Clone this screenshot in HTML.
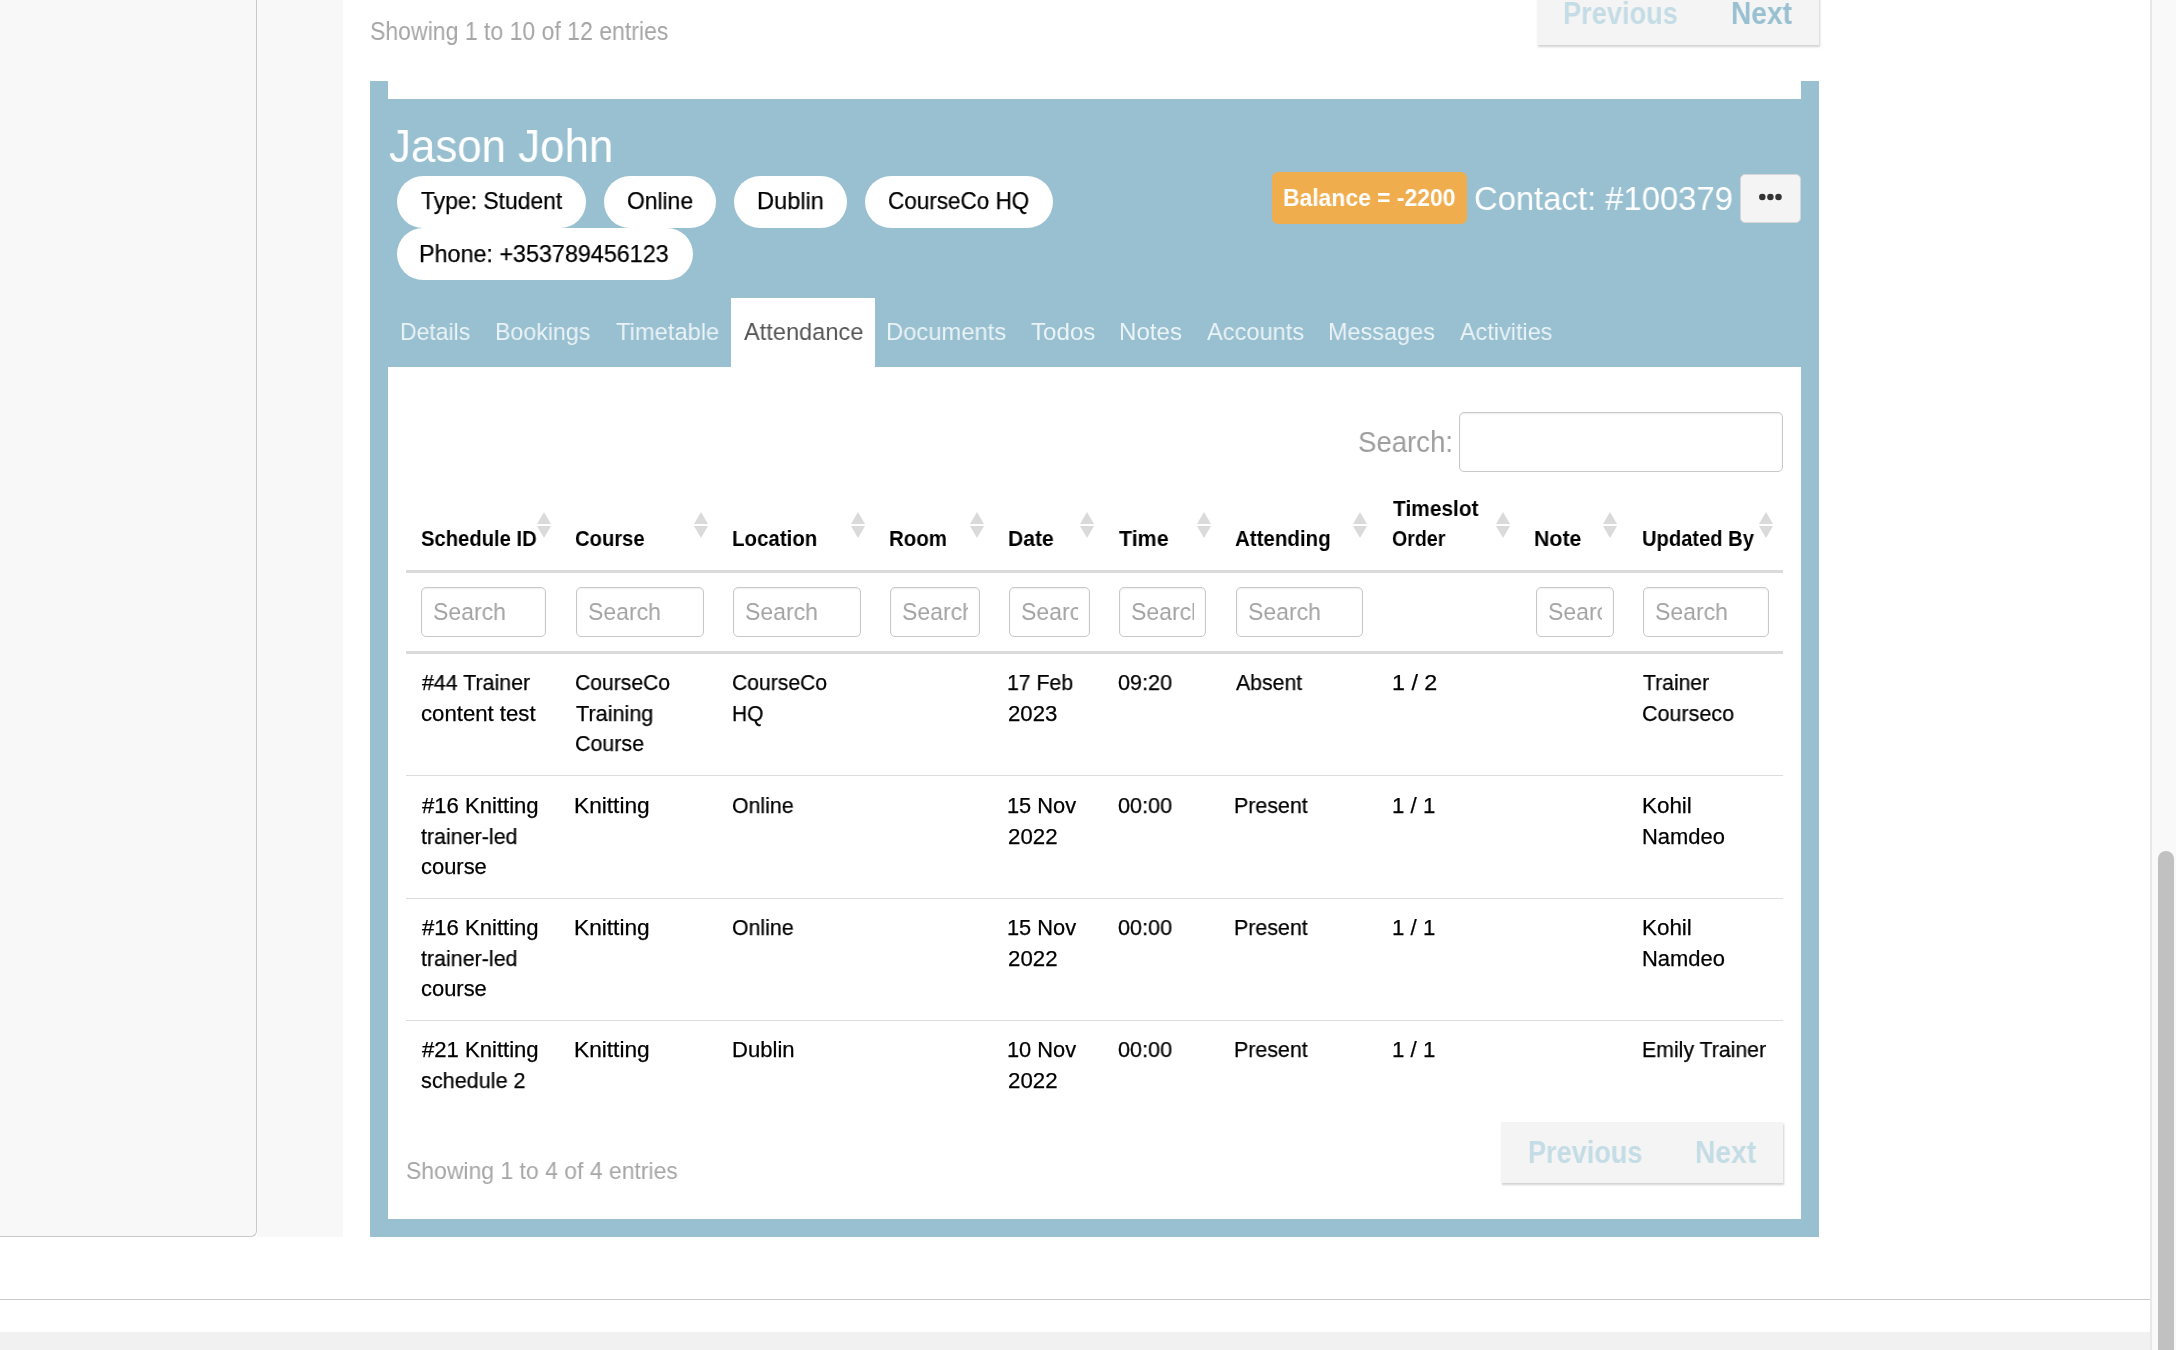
<!DOCTYPE html>
<html><head><meta charset="utf-8"><title>Attendance</title>
<style>
html,body{margin:0;padding:0;}
body{width:2176px;height:1350px;overflow:hidden;position:relative;background:#fff;font-family:"Liberation Sans",sans-serif;}
body div{position:absolute;}
.t{position:absolute;white-space:pre;transform-origin:0 0;will-change:transform;}
</style></head><body>
<div style="left:0px;top:-10px;width:256px;height:1246px;background:#f8f8f8;border-right:1px solid #c9c9c9;border-bottom:1px solid #c9c9c9;border-bottom-right-radius:6px;"></div>
<div style="left:257px;top:0px;width:86px;height:1237px;background:#f8f8f8;"></div>
<div style="left:0px;top:1299px;width:2150px;height:1px;background:#cacaca;"></div>
<div style="left:0px;top:1332px;width:2150px;height:18px;background:#f1f1f1;"></div>
<div style="left:2150px;top:0px;width:2px;height:1350px;background:#e7e7e7;"></div>
<div style="left:2152px;top:0px;width:24px;height:1350px;background:#f9f9f9;"></div>
<div style="left:2158px;top:851px;width:16px;height:520px;background:#c1c1c1;border-radius:8px;"></div>
<div style="left:1537px;top:-16px;width:282px;height:61px;background:#f4f4f4;box-shadow:1px 2px 2px rgba(0,0,0,0.18);"></div>
<span class="t" style="left:1563.23px;top:-2.34px;font-size:30.52px;line-height:30.52px;font-weight:bold;color:#c4dce5;transform:scaleX(0.8906);">Previous</span>
<span class="t" style="left:1731.17px;top:-2.34px;font-size:30.52px;line-height:30.52px;font-weight:bold;color:#98c0d1;transform:scaleX(0.9217);">Next</span>
<span class="t" style="left:369.96px;top:19.17px;font-size:25.44px;line-height:25.44px;color:#a6a6a6;transform:scaleX(0.9054);">Showing 1 to 10 of 12 entries</span>
<div style="left:370px;top:81px;width:1449px;height:1156px;background:#98c0d1;"></div>
<div style="left:388px;top:81px;width:1413px;height:18px;background:#fff;"></div>
<div style="left:388px;top:367px;width:1413px;height:852px;background:#fff;"></div>
<div style="left:731px;top:298px;width:144px;height:69px;background:#fff;"></div>
<span class="t" style="left:389.04px;top:122.75px;font-size:46.08px;line-height:46.08px;color:#ffffff;transform:scaleX(0.9518);">Jason John</span>
<div style="left:397px;top:176px;width:189px;height:52px;background:#fff;border-radius:26px;"></div>
<span class="t" style="left:420.94px;top:189.22px;font-size:23.84px;line-height:23.84px;color:#000;transform:scaleX(0.9599);-webkit-text-stroke:0.25px #000;">Type: Student</span>
<div style="left:604px;top:176px;width:112px;height:52px;background:#fff;border-radius:26px;"></div>
<span class="t" style="left:626.97px;top:189.22px;font-size:23.84px;line-height:23.84px;color:#000;transform:scaleX(0.9589);-webkit-text-stroke:0.25px #000;">Online</span>
<div style="left:734px;top:176px;width:113px;height:52px;background:#fff;border-radius:26px;"></div>
<span class="t" style="left:757.11px;top:189.22px;font-size:23.84px;line-height:23.84px;color:#000;transform:scaleX(0.9903);-webkit-text-stroke:0.25px #000;">Dublin</span>
<div style="left:865px;top:176px;width:188px;height:52px;background:#fff;border-radius:26px;"></div>
<span class="t" style="left:887.88px;top:189.22px;font-size:23.84px;line-height:23.84px;color:#000;transform:scaleX(0.9436);-webkit-text-stroke:0.25px #000;">CourseCo HQ</span>
<div style="left:397px;top:228px;width:296px;height:52px;background:#fff;border-radius:26px;"></div>
<span class="t" style="left:419.13px;top:241.8px;font-size:23.98px;line-height:23.98px;color:#000;transform:scaleX(0.9730);-webkit-text-stroke:0.25px #000;">Phone: +353789456123</span>
<div style="left:1272px;top:172px;width:195px;height:52px;background:#f0ad4e;border-radius:6px;"></div>
<span class="t" style="left:1283.01px;top:186.32px;font-size:23.84px;line-height:23.84px;font-weight:bold;color:#fff;transform:scaleX(0.9605);">Balance = -2200</span>
<span class="t" style="left:1473.96px;top:182.13px;font-size:33.87px;line-height:33.87px;color:#fff;transform:scaleX(0.9684);">Contact: #100379</span>
<div style="left:1740px;top:174px;width:61px;height:49px;background:#f4f4f4;border:1px solid #d6d6d6;border-radius:5px;box-sizing:border-box;"></div>
<svg style="position:absolute;left:1750px;top:187px;" width="40" height="20" viewBox="0 0 40 20"><circle cx="12.3" cy="10.1" r="3.25" fill="#333"/><circle cx="20.4" cy="10.1" r="3.25" fill="#333"/><circle cx="28.5" cy="10.1" r="3.25" fill="#333"/></svg>
<span class="t" style="left:400.16px;top:319.98px;font-size:24.13px;line-height:24.13px;color:rgba(255,255,255,0.8);transform:scaleX(0.9516);">Details</span>
<span class="t" style="left:495.15px;top:319.98px;font-size:24.13px;line-height:24.13px;color:rgba(255,255,255,0.8);transform:scaleX(0.9605);">Bookings</span>
<span class="t" style="left:616.03px;top:319.98px;font-size:24.13px;line-height:24.13px;color:rgba(255,255,255,0.8);transform:scaleX(0.9835);">Timetable</span>
<span class="t" style="left:744.30px;top:319.98px;font-size:24.13px;line-height:24.13px;color:#555555;transform:scaleX(0.9777);">Attendance</span>
<span class="t" style="left:886.40px;top:319.98px;font-size:24.13px;line-height:24.13px;color:rgba(255,255,255,0.8);transform:scaleX(0.9848);">Documents</span>
<span class="t" style="left:1031.32px;top:319.98px;font-size:24.13px;line-height:24.13px;color:rgba(255,255,255,0.8);transform:scaleX(0.9937);">Todos</span>
<span class="t" style="left:1119.08px;top:319.98px;font-size:24.13px;line-height:24.13px;color:rgba(255,255,255,0.8);transform:scaleX(0.9967);">Notes</span>
<span class="t" style="left:1207.00px;top:319.98px;font-size:24.13px;line-height:24.13px;color:rgba(255,255,255,0.8);transform:scaleX(0.9782);">Accounts</span>
<span class="t" style="left:1327.52px;top:319.98px;font-size:24.13px;line-height:24.13px;color:rgba(255,255,255,0.8);transform:scaleX(0.9716);">Messages</span>
<span class="t" style="left:1459.70px;top:319.98px;font-size:24.13px;line-height:24.13px;color:rgba(255,255,255,0.8);transform:scaleX(0.9710);">Activities</span>
<span class="t" style="left:1358.46px;top:426.71px;font-size:30.23px;line-height:30.23px;color:#9e9e9e;transform:scaleX(0.9124);">Search:</span>
<div style="left:1459px;top:412px;width:324px;height:60px;background:#fff;border:1px solid #c8c8c8;border-radius:5px;box-sizing:border-box;box-shadow:inset 0 1px 2px rgba(0,0,0,0.08);"></div>
<span class="t" style="left:420.79px;top:528.48px;font-size:22.24px;line-height:22.24px;font-weight:bold;color:#000;transform:scaleX(0.9089);">Schedule ID</span>
<div style="left:536.7px;top:511.5px;width:0;height:0;border-left:7.3px solid transparent;border-right:7.3px solid transparent;border-bottom:12.2px solid #dadada;"></div>
<div style="left:536.7px;top:526px;width:0;height:0;border-left:7.3px solid transparent;border-right:7.3px solid transparent;border-top:12.2px solid #dadada;"></div>
<span class="t" style="left:575.19px;top:528.48px;font-size:22.24px;line-height:22.24px;font-weight:bold;color:#000;transform:scaleX(0.9087);">Course</span>
<div style="left:693.5px;top:511.5px;width:0;height:0;border-left:7.3px solid transparent;border-right:7.3px solid transparent;border-bottom:12.2px solid #dadada;"></div>
<div style="left:693.5px;top:526px;width:0;height:0;border-left:7.3px solid transparent;border-right:7.3px solid transparent;border-top:12.2px solid #dadada;"></div>
<span class="t" style="left:731.97px;top:528.48px;font-size:22.24px;line-height:22.24px;font-weight:bold;color:#000;transform:scaleX(0.9205);">Location</span>
<div style="left:850.6px;top:511.5px;width:0;height:0;border-left:7.3px solid transparent;border-right:7.3px solid transparent;border-bottom:12.2px solid #dadada;"></div>
<div style="left:850.6px;top:526px;width:0;height:0;border-left:7.3px solid transparent;border-right:7.3px solid transparent;border-top:12.2px solid #dadada;"></div>
<span class="t" style="left:889.17px;top:528.48px;font-size:22.24px;line-height:22.24px;font-weight:bold;color:#000;transform:scaleX(0.9193);">Room</span>
<div style="left:969.6px;top:511.5px;width:0;height:0;border-left:7.3px solid transparent;border-right:7.3px solid transparent;border-bottom:12.2px solid #dadada;"></div>
<div style="left:969.6px;top:526px;width:0;height:0;border-left:7.3px solid transparent;border-right:7.3px solid transparent;border-top:12.2px solid #dadada;"></div>
<span class="t" style="left:1007.63px;top:528.48px;font-size:22.24px;line-height:22.24px;font-weight:bold;color:#000;transform:scaleX(0.9493);">Date</span>
<div style="left:1079.7px;top:511.5px;width:0;height:0;border-left:7.3px solid transparent;border-right:7.3px solid transparent;border-bottom:12.2px solid #dadada;"></div>
<div style="left:1079.7px;top:526px;width:0;height:0;border-left:7.3px solid transparent;border-right:7.3px solid transparent;border-top:12.2px solid #dadada;"></div>
<span class="t" style="left:1118.69px;top:528.48px;font-size:22.24px;line-height:22.24px;font-weight:bold;color:#000;transform:scaleX(0.9626);">Time</span>
<div style="left:1196.8px;top:511.5px;width:0;height:0;border-left:7.3px solid transparent;border-right:7.3px solid transparent;border-bottom:12.2px solid #dadada;"></div>
<div style="left:1196.8px;top:526px;width:0;height:0;border-left:7.3px solid transparent;border-right:7.3px solid transparent;border-top:12.2px solid #dadada;"></div>
<span class="t" style="left:1235.19px;top:528.48px;font-size:22.24px;line-height:22.24px;font-weight:bold;color:#000;transform:scaleX(0.9220);">Attending</span>
<div style="left:1353.4px;top:511.5px;width:0;height:0;border-left:7.3px solid transparent;border-right:7.3px solid transparent;border-bottom:12.2px solid #dadada;"></div>
<div style="left:1353.4px;top:526px;width:0;height:0;border-left:7.3px solid transparent;border-right:7.3px solid transparent;border-top:12.2px solid #dadada;"></div>
<span class="t" style="left:1392.69px;top:497.88px;font-size:22.24px;line-height:22.24px;font-weight:bold;color:#000;transform:scaleX(0.9402);">Timeslot</span>
<span class="t" style="left:1392.12px;top:528.48px;font-size:22.24px;line-height:22.24px;font-weight:bold;color:#000;transform:scaleX(0.8800);">Order</span>
<div style="left:1496.4px;top:511.5px;width:0;height:0;border-left:7.3px solid transparent;border-right:7.3px solid transparent;border-bottom:12.2px solid #dadada;"></div>
<div style="left:1496.4px;top:526px;width:0;height:0;border-left:7.3px solid transparent;border-right:7.3px solid transparent;border-top:12.2px solid #dadada;"></div>
<span class="t" style="left:1534.31px;top:528.48px;font-size:22.24px;line-height:22.24px;font-weight:bold;color:#000;transform:scaleX(0.9586);">Note</span>
<div style="left:1602.5px;top:511.5px;width:0;height:0;border-left:7.3px solid transparent;border-right:7.3px solid transparent;border-bottom:12.2px solid #dadada;"></div>
<div style="left:1602.5px;top:526px;width:0;height:0;border-left:7.3px solid transparent;border-right:7.3px solid transparent;border-top:12.2px solid #dadada;"></div>
<span class="t" style="left:1641.79px;top:528.48px;font-size:22.24px;line-height:22.24px;font-weight:bold;color:#000;transform:scaleX(0.9059);">Updated By</span>
<div style="left:1758.7px;top:511.5px;width:0;height:0;border-left:7.3px solid transparent;border-right:7.3px solid transparent;border-bottom:12.2px solid #dadada;"></div>
<div style="left:1758.7px;top:526px;width:0;height:0;border-left:7.3px solid transparent;border-right:7.3px solid transparent;border-top:12.2px solid #dadada;"></div>
<div style="left:406px;top:570px;width:1377px;height:3px;background:#dadada;"></div>
<div style="left:421px;top:587px;width:125px;height:50px;background:#fff;border:1px solid #c8c8c8;border-radius:5px;box-sizing:border-box;box-shadow:inset 0 1px 2px rgba(0,0,0,0.07);"></div>
<div style="left:433px;top:587px;width:101px;height:50px;overflow:hidden;">
<span class="t" style="left:0.06px;top:12.58px;font-size:24.71px;line-height:24.71px;color:#a3a3a3;transform:scaleX(0.9313);">Search</span>
</div>
<div style="left:576px;top:587px;width:128px;height:50px;background:#fff;border:1px solid #c8c8c8;border-radius:5px;box-sizing:border-box;box-shadow:inset 0 1px 2px rgba(0,0,0,0.07);"></div>
<div style="left:588px;top:587px;width:104px;height:50px;overflow:hidden;">
<span class="t" style="left:0.06px;top:12.58px;font-size:24.71px;line-height:24.71px;color:#a3a3a3;transform:scaleX(0.9313);">Search</span>
</div>
<div style="left:733px;top:587px;width:128px;height:50px;background:#fff;border:1px solid #c8c8c8;border-radius:5px;box-sizing:border-box;box-shadow:inset 0 1px 2px rgba(0,0,0,0.07);"></div>
<div style="left:745px;top:587px;width:104px;height:50px;overflow:hidden;">
<span class="t" style="left:0.06px;top:12.58px;font-size:24.71px;line-height:24.71px;color:#a3a3a3;transform:scaleX(0.9313);">Search</span>
</div>
<div style="left:890px;top:587px;width:90px;height:50px;background:#fff;border:1px solid #c8c8c8;border-radius:5px;box-sizing:border-box;box-shadow:inset 0 1px 2px rgba(0,0,0,0.07);"></div>
<div style="left:902px;top:587px;width:66px;height:50px;overflow:hidden;">
<span class="t" style="left:0.06px;top:12.58px;font-size:24.71px;line-height:24.71px;color:#a3a3a3;transform:scaleX(0.9313);">Search</span>
</div>
<div style="left:1009px;top:587px;width:81px;height:50px;background:#fff;border:1px solid #c8c8c8;border-radius:5px;box-sizing:border-box;box-shadow:inset 0 1px 2px rgba(0,0,0,0.07);"></div>
<div style="left:1021px;top:587px;width:57px;height:50px;overflow:hidden;">
<span class="t" style="left:0.06px;top:12.58px;font-size:24.71px;line-height:24.71px;color:#a3a3a3;transform:scaleX(0.9313);">Search</span>
</div>
<div style="left:1119px;top:587px;width:87px;height:50px;background:#fff;border:1px solid #c8c8c8;border-radius:5px;box-sizing:border-box;box-shadow:inset 0 1px 2px rgba(0,0,0,0.07);"></div>
<div style="left:1131px;top:587px;width:63px;height:50px;overflow:hidden;">
<span class="t" style="left:0.06px;top:12.58px;font-size:24.71px;line-height:24.71px;color:#a3a3a3;transform:scaleX(0.9313);">Search</span>
</div>
<div style="left:1236px;top:587px;width:127px;height:50px;background:#fff;border:1px solid #c8c8c8;border-radius:5px;box-sizing:border-box;box-shadow:inset 0 1px 2px rgba(0,0,0,0.07);"></div>
<div style="left:1248px;top:587px;width:103px;height:50px;overflow:hidden;">
<span class="t" style="left:0.06px;top:12.58px;font-size:24.71px;line-height:24.71px;color:#a3a3a3;transform:scaleX(0.9313);">Search</span>
</div>
<div style="left:1536px;top:587px;width:78px;height:50px;background:#fff;border:1px solid #c8c8c8;border-radius:5px;box-sizing:border-box;box-shadow:inset 0 1px 2px rgba(0,0,0,0.07);"></div>
<div style="left:1548px;top:587px;width:54px;height:50px;overflow:hidden;">
<span class="t" style="left:0.06px;top:12.58px;font-size:24.71px;line-height:24.71px;color:#a3a3a3;transform:scaleX(0.9313);">Search</span>
</div>
<div style="left:1643px;top:587px;width:126px;height:50px;background:#fff;border:1px solid #c8c8c8;border-radius:5px;box-sizing:border-box;box-shadow:inset 0 1px 2px rgba(0,0,0,0.07);"></div>
<div style="left:1655px;top:587px;width:102px;height:50px;overflow:hidden;">
<span class="t" style="left:0.06px;top:12.58px;font-size:24.71px;line-height:24.71px;color:#a3a3a3;transform:scaleX(0.9313);">Search</span>
</div>
<div style="left:406px;top:651px;width:1377px;height:3px;background:#dadada;"></div>
<div style="left:406px;top:775px;width:1377px;height:1px;background:#dddddd;"></div>
<div style="left:406px;top:898px;width:1377px;height:1px;background:#dddddd;"></div>
<div style="left:406px;top:1020px;width:1377px;height:1px;background:#dddddd;"></div>
<span class="t" style="left:421.59px;top:672.04px;font-size:21.80px;line-height:21.80px;color:#000;transform:scaleX(0.9802);-webkit-text-stroke:0.25px #000;">#44 Trainer</span>
<span class="t" style="left:420.81px;top:702.64px;font-size:21.80px;line-height:21.80px;color:#000;transform:scaleX(1.0168);-webkit-text-stroke:0.25px #000;">content test</span>
<span class="t" style="left:575.24px;top:672.04px;font-size:21.80px;line-height:21.80px;color:#000;transform:scaleX(0.9683);-webkit-text-stroke:0.25px #000;">CourseCo</span>
<span class="t" style="left:575.87px;top:702.64px;font-size:21.80px;line-height:21.80px;color:#000;transform:scaleX(0.9922);-webkit-text-stroke:0.25px #000;">Training</span>
<span class="t" style="left:575.23px;top:733.24px;font-size:21.80px;line-height:21.80px;color:#000;transform:scaleX(0.9818);-webkit-text-stroke:0.25px #000;">Course</span>
<span class="t" style="left:732.24px;top:672.04px;font-size:21.80px;line-height:21.80px;color:#000;transform:scaleX(0.9683);-webkit-text-stroke:0.25px #000;">CourseCo</span>
<span class="t" style="left:731.62px;top:702.64px;font-size:21.80px;line-height:21.80px;color:#000;transform:scaleX(0.9609);-webkit-text-stroke:0.25px #000;">HQ</span>
<span class="t" style="left:1007.41px;top:672.04px;font-size:21.80px;line-height:21.80px;color:#000;transform:scaleX(0.9740);-webkit-text-stroke:0.25px #000;">17 Feb</span>
<span class="t" style="left:1007.89px;top:702.64px;font-size:21.80px;line-height:21.80px;color:#000;transform:scaleX(1.0162);-webkit-text-stroke:0.25px #000;">2023</span>
<span class="t" style="left:1118.14px;top:672.04px;font-size:21.80px;line-height:21.80px;color:#000;transform:scaleX(0.9911);-webkit-text-stroke:0.25px #000;">09:20</span>
<span class="t" style="left:1236.00px;top:672.04px;font-size:21.80px;line-height:21.80px;color:#000;transform:scaleX(0.9749);-webkit-text-stroke:0.25px #000;">Absent</span>
<span class="t" style="left:1391.55px;top:672.04px;font-size:21.80px;line-height:21.80px;color:#000;transform:scaleX(1.0685);-webkit-text-stroke:0.25px #000;">1 / 2</span>
<span class="t" style="left:1642.98px;top:672.04px;font-size:21.80px;line-height:21.80px;color:#000;transform:scaleX(0.9692);-webkit-text-stroke:0.25px #000;">Trainer</span>
<span class="t" style="left:1642.32px;top:702.64px;font-size:21.80px;line-height:21.80px;color:#000;transform:scaleX(0.9863);-webkit-text-stroke:0.25px #000;">Courseco</span>
<span class="t" style="left:421.59px;top:795.04px;font-size:21.80px;line-height:21.80px;color:#000;transform:scaleX(1.0133);-webkit-text-stroke:0.25px #000;">#16 Knitting</span>
<span class="t" style="left:421.38px;top:825.64px;font-size:21.80px;line-height:21.80px;color:#000;transform:scaleX(0.9827);-webkit-text-stroke:0.25px #000;">trainer-led</span>
<span class="t" style="left:420.82px;top:856.24px;font-size:21.80px;line-height:21.80px;color:#000;transform:scaleX(1.0054);-webkit-text-stroke:0.25px #000;">course</span>
<span class="t" style="left:574.48px;top:795.04px;font-size:21.80px;line-height:21.80px;color:#000;transform:scaleX(1.0410);-webkit-text-stroke:0.25px #000;">Knitting</span>
<span class="t" style="left:732.34px;top:795.04px;font-size:21.80px;line-height:21.80px;color:#000;transform:scaleX(0.9763);-webkit-text-stroke:0.25px #000;">Online</span>
<span class="t" style="left:1007.37px;top:795.04px;font-size:21.80px;line-height:21.80px;color:#000;-webkit-text-stroke:0.25px #000;">15 Nov</span>
<span class="t" style="left:1007.89px;top:825.64px;font-size:21.80px;line-height:21.80px;color:#000;transform:scaleX(1.0209);-webkit-text-stroke:0.25px #000;">2022</span>
<span class="t" style="left:1118.14px;top:795.04px;font-size:21.80px;line-height:21.80px;color:#000;transform:scaleX(0.9911);-webkit-text-stroke:0.25px #000;">00:00</span>
<span class="t" style="left:1234.29px;top:795.04px;font-size:21.80px;line-height:21.80px;color:#000;transform:scaleX(0.9815);-webkit-text-stroke:0.25px #000;">Present</span>
<span class="t" style="left:1391.63px;top:795.04px;font-size:21.80px;line-height:21.80px;color:#000;transform:scaleX(1.0204);-webkit-text-stroke:0.25px #000;">1 / 1</span>
<span class="t" style="left:1641.61px;top:795.04px;font-size:21.80px;line-height:21.80px;color:#000;transform:scaleX(1.0279);-webkit-text-stroke:0.25px #000;">Kohil</span>
<span class="t" style="left:1641.64px;top:825.64px;font-size:21.80px;line-height:21.80px;color:#000;transform:scaleX(1.0063);-webkit-text-stroke:0.25px #000;">Namdeo</span>
<span class="t" style="left:421.59px;top:917.04px;font-size:21.80px;line-height:21.80px;color:#000;transform:scaleX(1.0133);-webkit-text-stroke:0.25px #000;">#16 Knitting</span>
<span class="t" style="left:421.38px;top:947.64px;font-size:21.80px;line-height:21.80px;color:#000;transform:scaleX(0.9827);-webkit-text-stroke:0.25px #000;">trainer-led</span>
<span class="t" style="left:420.82px;top:978.24px;font-size:21.80px;line-height:21.80px;color:#000;transform:scaleX(1.0054);-webkit-text-stroke:0.25px #000;">course</span>
<span class="t" style="left:574.48px;top:917.04px;font-size:21.80px;line-height:21.80px;color:#000;transform:scaleX(1.0410);-webkit-text-stroke:0.25px #000;">Knitting</span>
<span class="t" style="left:732.34px;top:917.04px;font-size:21.80px;line-height:21.80px;color:#000;transform:scaleX(0.9763);-webkit-text-stroke:0.25px #000;">Online</span>
<span class="t" style="left:1007.37px;top:917.04px;font-size:21.80px;line-height:21.80px;color:#000;-webkit-text-stroke:0.25px #000;">15 Nov</span>
<span class="t" style="left:1007.89px;top:947.64px;font-size:21.80px;line-height:21.80px;color:#000;transform:scaleX(1.0209);-webkit-text-stroke:0.25px #000;">2022</span>
<span class="t" style="left:1118.14px;top:917.04px;font-size:21.80px;line-height:21.80px;color:#000;transform:scaleX(0.9911);-webkit-text-stroke:0.25px #000;">00:00</span>
<span class="t" style="left:1234.29px;top:917.04px;font-size:21.80px;line-height:21.80px;color:#000;transform:scaleX(0.9815);-webkit-text-stroke:0.25px #000;">Present</span>
<span class="t" style="left:1391.63px;top:917.04px;font-size:21.80px;line-height:21.80px;color:#000;transform:scaleX(1.0204);-webkit-text-stroke:0.25px #000;">1 / 1</span>
<span class="t" style="left:1641.61px;top:917.04px;font-size:21.80px;line-height:21.80px;color:#000;transform:scaleX(1.0279);-webkit-text-stroke:0.25px #000;">Kohil</span>
<span class="t" style="left:1641.64px;top:947.64px;font-size:21.80px;line-height:21.80px;color:#000;transform:scaleX(1.0063);-webkit-text-stroke:0.25px #000;">Namdeo</span>
<span class="t" style="left:421.59px;top:1039.04px;font-size:21.80px;line-height:21.80px;color:#000;transform:scaleX(1.0133);-webkit-text-stroke:0.25px #000;">#21 Knitting</span>
<span class="t" style="left:421.05px;top:1069.64px;font-size:21.80px;line-height:21.80px;color:#000;transform:scaleX(0.9916);-webkit-text-stroke:0.25px #000;">schedule 2</span>
<span class="t" style="left:574.48px;top:1039.04px;font-size:21.80px;line-height:21.80px;color:#000;transform:scaleX(1.0410);-webkit-text-stroke:0.25px #000;">Knitting</span>
<span class="t" style="left:731.53px;top:1039.04px;font-size:21.80px;line-height:21.80px;color:#000;transform:scaleX(1.0128);-webkit-text-stroke:0.25px #000;">Dublin</span>
<span class="t" style="left:1007.37px;top:1039.04px;font-size:21.80px;line-height:21.80px;color:#000;-webkit-text-stroke:0.25px #000;">10 Nov</span>
<span class="t" style="left:1007.89px;top:1069.64px;font-size:21.80px;line-height:21.80px;color:#000;transform:scaleX(1.0209);-webkit-text-stroke:0.25px #000;">2022</span>
<span class="t" style="left:1118.14px;top:1039.04px;font-size:21.80px;line-height:21.80px;color:#000;transform:scaleX(0.9911);-webkit-text-stroke:0.25px #000;">00:00</span>
<span class="t" style="left:1234.29px;top:1039.04px;font-size:21.80px;line-height:21.80px;color:#000;transform:scaleX(0.9815);-webkit-text-stroke:0.25px #000;">Present</span>
<span class="t" style="left:1391.63px;top:1039.04px;font-size:21.80px;line-height:21.80px;color:#000;transform:scaleX(1.0204);-webkit-text-stroke:0.25px #000;">1 / 1</span>
<span class="t" style="left:1641.70px;top:1039.04px;font-size:21.80px;line-height:21.80px;color:#000;transform:scaleX(0.9757);-webkit-text-stroke:0.25px #000;">Emily Trainer</span>
<span class="t" style="left:405.97px;top:1158.68px;font-size:24.13px;line-height:24.13px;color:#a6a6a6;transform:scaleX(0.9516);">Showing 1 to 4 of 4 entries</span>
<div style="left:1501px;top:1122px;width:282px;height:61px;background:#f4f4f4;box-shadow:1px 2px 2px rgba(0,0,0,0.18);"></div>
<span class="t" style="left:1527.64px;top:1136.86px;font-size:30.52px;line-height:30.52px;font-weight:bold;color:#c4dce5;transform:scaleX(0.8874);">Previous</span>
<span class="t" style="left:1695.17px;top:1136.86px;font-size:30.52px;line-height:30.52px;font-weight:bold;color:#c4dce5;transform:scaleX(0.9249);">Next</span>
</body></html>
